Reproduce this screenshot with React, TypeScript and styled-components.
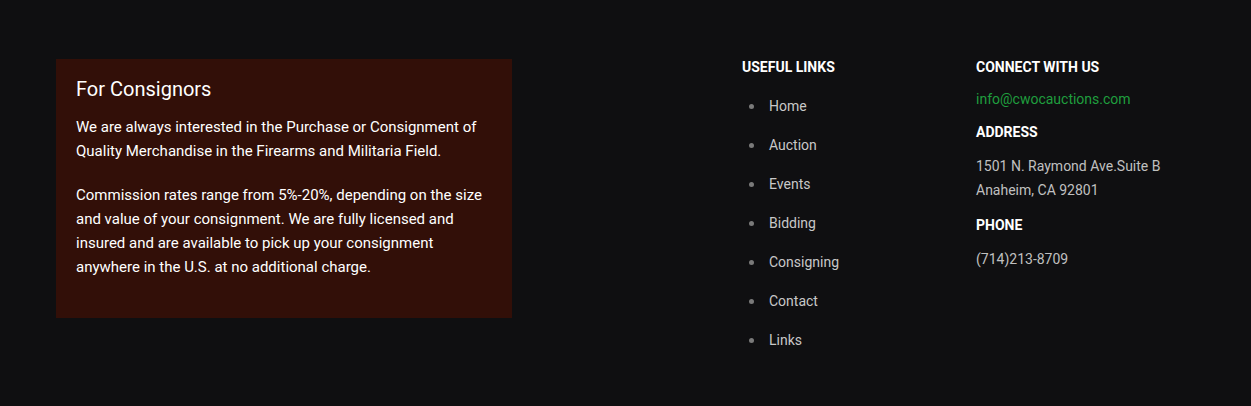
import React from "react";
import styled, { createGlobalStyle } from "styled-components";

const Global = createGlobalStyle`
  html, body { margin: 0; padding: 0; background: #0f0f11; }
  body { font-family: Roboto, "Liberation Sans", Arial, sans-serif; }
  * { box-sizing: border-box; }
`;

const Footer = styled.footer`
  display: grid;
  grid-template-columns: 456px 230px 234px 1fr;
  align-items: start;
  padding: 59px 0 0 56px;
  min-height: 406px;
  background: #0f0f11;
`;

const Card = styled.section`
  grid-column: 1;
  background: #320f08;
  padding: 18px 20px 39px 20px;
  color: #ffffff;
`;

const CardTitle = styled.h3`
  margin: 0 0 14px;
  font-size: 20px;
  font-weight: 400;
  line-height: 24px;
`;

const CardText = styled.p`
  margin: 0 0 20px;
  font-size: 15px;
  line-height: 24px;
  &:last-child { margin-bottom: 0; }
`;

const Column = styled.div<{ $col: number }>`
  grid-column: ${(p) => p.$col};
  display: flex;
  flex-direction: column;
`;

const Heading = styled.h4<{ $gap?: number }>`
  margin: ${(p) => p.$gap ?? 0}px 0 0;
  font-size: 14px;
  font-weight: 700;
  line-height: 16px;
  letter-spacing: 0;
  color: #ffffff;
  text-transform: uppercase;
`;

const LinkList = styled.ul`
  list-style: none;
  margin: 12px 0 0;
  padding: 0;
`;

const LinkItem = styled.li`
  display: flex;
  align-items: center;
  padding: 9px 0;
  line-height: 21px;
  font-size: 14px;
  color: #c8c8c8;
  &::before {
    content: "";
    width: 5px;
    height: 5px;
    border-radius: 50%;
    background: #7a7a7a;
    margin: 0 15px 0 7px;
  }
`;

const Info = styled.div<{ $gap: number; $green?: boolean }>`
  margin-top: ${(p) => p.$gap}px;
  font-size: 14px;
  line-height: 24px;
  color: ${(p) => (p.$green ? "#1f9e3e" : "#c0c0c0")};
`;

const links = ["Home", "Auction", "Events", "Bidding", "Consigning", "Contact", "Links"];

export default function App() {
  return (
    <>
      <Global />
      <Footer>
        <Card>
          <CardTitle>For Consignors</CardTitle>
          <CardText>
            We are always interested in the Purchase or Consignment of Quality Merchandise in the Firearms and Militaria Field.
          </CardText>
          <CardText>
            Commission rates range from 5%-20%, depending on the size and value of your consignment. We are fully licensed and insured and are available to pick up your consignment anywhere in the U.S. at no additional charge.
          </CardText>
        </Card>
        <Column $col={3}>
          <Heading>Useful Links</Heading>
          <LinkList>
            {links.map((l) => (
              <LinkItem key={l}>{l}</LinkItem>
            ))}
          </LinkList>
        </Column>
        <Column $col={4}>
          <Heading>Connect With Us</Heading>
          <Info $gap={12} $green>info@cwocauctions.com</Info>
          <Heading $gap={13}>Address</Heading>
          <Info $gap={14}>
            1501 N. Raymond Ave.Suite B
            <br />
            Anaheim, CA 92801
          </Info>
          <Heading $gap={15}>Phone</Heading>
          <Info $gap={14}>(714)213-8709</Info>
        </Column>
      </Footer>
    </>
  );
}
